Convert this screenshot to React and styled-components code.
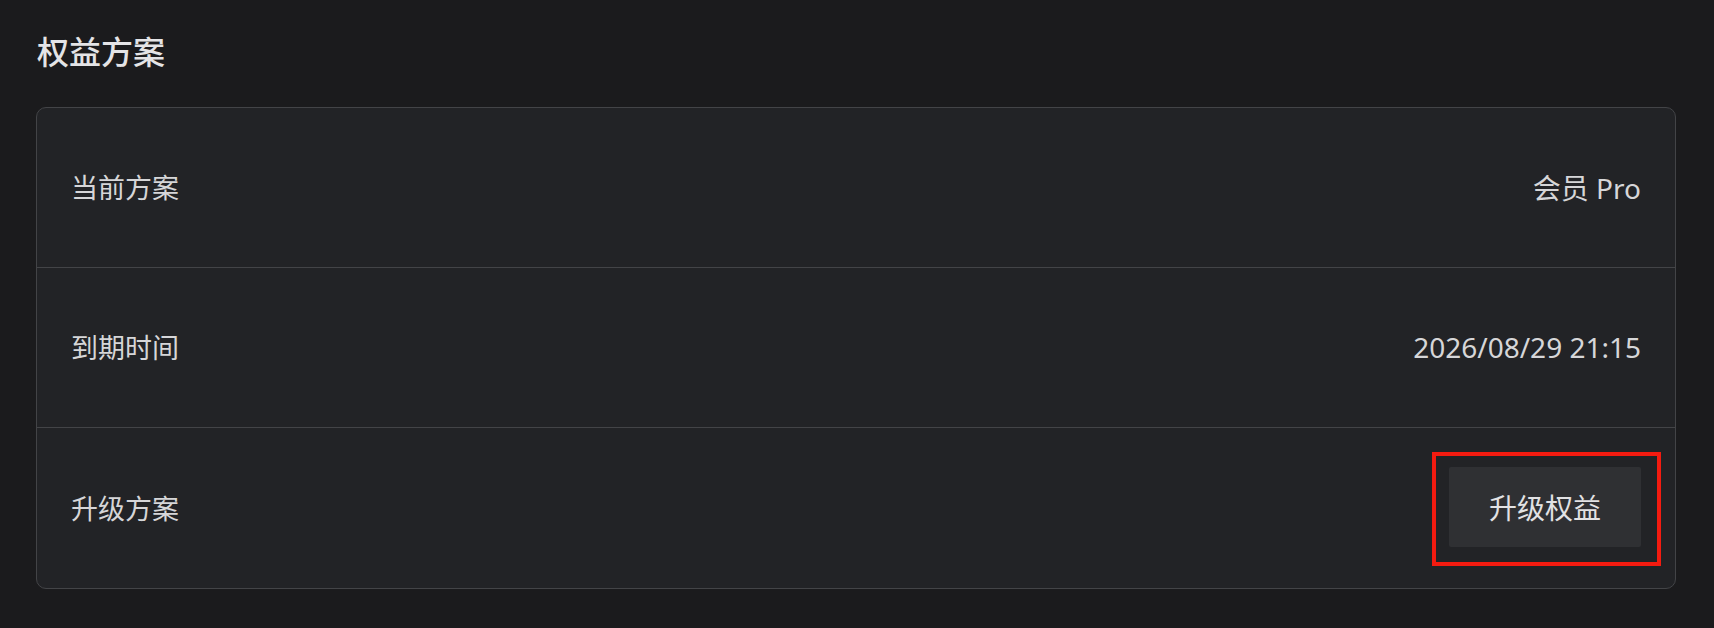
import styled, { createGlobalStyle } from "styled-components";

const GlobalStyle = createGlobalStyle`
  html, body {
    margin: 0;
    background: #1b1b1d;
  }
  body {
    font-family: "Noto Sans", "Noto Sans CJK SC", sans-serif;
    color: #dcdcdc;
  }
`

const Page = styled.div`
  padding: 36px 38px 40px 36px;
`

const Title = styled.h2`
  margin: 0 0 39px 1px;
  font-size: 32px;
  line-height: 32px;
  font-weight: 500;
  color: #e4e4e6;
`

const Card = styled.div`
  background: #222326;
  border: 1px solid #434447;
  border-radius: 10px;
`

const Row = styled.div`
  display: flex;
  align-items: center;
  justify-content: space-between;
  height: 160px;
  box-sizing: border-box;
  padding: 0 34px 2px 34px;
  border-bottom: ${props => props.last ? "none" : "1px solid #434447"};
`

const Label = styled.span`
  font-size: 27px;
  color: #d6d6d8;
`

const Value = styled.span`
  font-size: 28px;
  color: #d6d6d8;
`

const Highlight = styled.div`
  position: relative;
  display: flex;

  &::after{
    content: "";
    position: absolute;
    top: -15px;
    bottom: -19px;
    left: -17px;
    right: -20px;
    border: 4px solid #f41b10;
    pointer-events: none;
  }
`

const Button = styled.button`
  width: 192px;
  height: 80px;
  border: none;
  border-radius: 2px;
  background: #2f3033;
  color: #e2e2e4;
  font-family: inherit;
  font-size: 28px;
  font-weight: 400;
  cursor: pointer;
`

function App() {
  return (
    <Page>
      <GlobalStyle />
      <Title>权益方案</Title>
      <Card>
        <Row>
          <Label>当前方案</Label>
          <Value>会员 Pro</Value>
        </Row>
        <Row>
          <Label>到期时间</Label>
          <Value>2026/08/29 21:15</Value>
        </Row>
        <Row last>
          <Label>升级方案</Label>
          <Highlight>
            <Button>升级权益</Button>
          </Highlight>
        </Row>
      </Card>
    </Page>
  )
}

export default App
